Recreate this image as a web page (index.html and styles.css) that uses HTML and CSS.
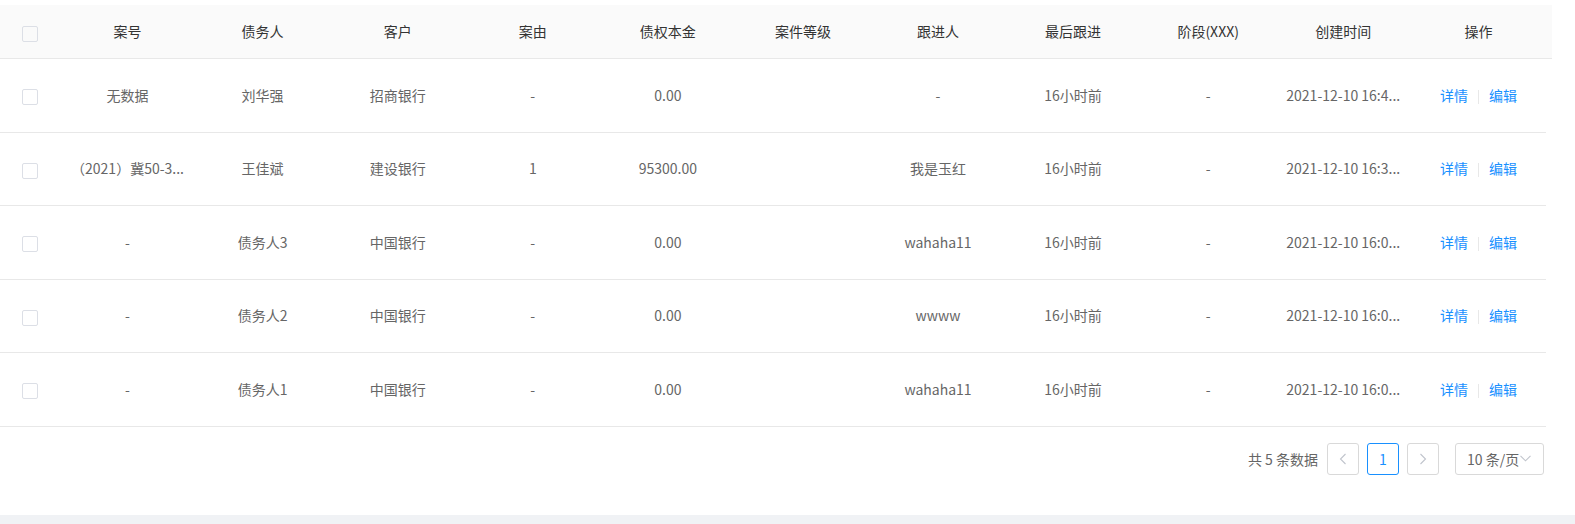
FILE: index.html
```html
<!DOCTYPE html>
<html lang="zh-CN">
<head>
    <meta charset="UTF-8">
    <meta name="viewport" content="width=device-width, initial-scale=1.0">
    <title>案件列表</title>
    <link rel="stylesheet" href="styles.css">
</head>
<body>
    <div class="panel">
        <table class="table-head">
            <colgroup>
                <col class="col-check">
                <col><col><col><col><col><col><col><col><col><col><col>
                <col class="col-gutter">
            </colgroup>
            <thead>
                <tr>
                    <th><span class="checkbox"></span></th>
                    <th><div class="cell">案号</div></th>
                    <th><div class="cell">债务人</div></th>
                    <th><div class="cell">客户</div></th>
                    <th><div class="cell">案由</div></th>
                    <th><div class="cell">债权本金</div></th>
                    <th><div class="cell">案件等级</div></th>
                    <th><div class="cell">跟进人</div></th>
                    <th><div class="cell">最后跟进</div></th>
                    <th><div class="cell">阶段(XXX)</div></th>
                    <th><div class="cell">创建时间</div></th>
                    <th><div class="cell">操作</div></th>
                    <th class="gutter"></th>
                </tr>
            </thead>
        </table>
        <table class="table-body">
            <colgroup>
                <col class="col-check">
                <col><col><col><col><col><col><col><col><col><col><col>
            </colgroup>
            <tbody>
                <tr>
                    <td><span class="checkbox"></span></td>
                    <td><div class="cell">无数据</div></td>
                    <td><div class="cell">刘华强</div></td>
                    <td><div class="cell">招商银行</div></td>
                    <td><div class="cell">-</div></td>
                    <td><div class="cell">0.00</div></td>
                    <td><div class="cell"></div></td>
                    <td><div class="cell">-</div></td>
                    <td><div class="cell">16小时前</div></td>
                    <td><div class="cell">-</div></td>
                    <td><div class="cell">2021-12-10 16:4...</div></td>
                    <td><div class="cell"><a class="link">详情</a><span class="divider"></span><a class="link">编辑</a></div></td>
                </tr>
                <tr>
                    <td><span class="checkbox"></span></td>
                    <td><div class="cell">（2021）冀50-3...</div></td>
                    <td><div class="cell">王佳斌</div></td>
                    <td><div class="cell">建设银行</div></td>
                    <td><div class="cell">1</div></td>
                    <td><div class="cell">95300.00</div></td>
                    <td><div class="cell"></div></td>
                    <td><div class="cell">我是玉红</div></td>
                    <td><div class="cell">16小时前</div></td>
                    <td><div class="cell">-</div></td>
                    <td><div class="cell">2021-12-10 16:3...</div></td>
                    <td><div class="cell"><a class="link">详情</a><span class="divider"></span><a class="link">编辑</a></div></td>
                </tr>
                <tr>
                    <td><span class="checkbox"></span></td>
                    <td><div class="cell">-</div></td>
                    <td><div class="cell">债务人3</div></td>
                    <td><div class="cell">中国银行</div></td>
                    <td><div class="cell">-</div></td>
                    <td><div class="cell">0.00</div></td>
                    <td><div class="cell"></div></td>
                    <td><div class="cell">wahaha11</div></td>
                    <td><div class="cell">16小时前</div></td>
                    <td><div class="cell">-</div></td>
                    <td><div class="cell">2021-12-10 16:0...</div></td>
                    <td><div class="cell"><a class="link">详情</a><span class="divider"></span><a class="link">编辑</a></div></td>
                </tr>
                <tr>
                    <td><span class="checkbox"></span></td>
                    <td><div class="cell">-</div></td>
                    <td><div class="cell">债务人2</div></td>
                    <td><div class="cell">中国银行</div></td>
                    <td><div class="cell">-</div></td>
                    <td><div class="cell">0.00</div></td>
                    <td><div class="cell"></div></td>
                    <td><div class="cell">wwww</div></td>
                    <td><div class="cell">16小时前</div></td>
                    <td><div class="cell">-</div></td>
                    <td><div class="cell">2021-12-10 16:0...</div></td>
                    <td><div class="cell"><a class="link">详情</a><span class="divider"></span><a class="link">编辑</a></div></td>
                </tr>
                <tr>
                    <td><span class="checkbox"></span></td>
                    <td><div class="cell">-</div></td>
                    <td><div class="cell">债务人1</div></td>
                    <td><div class="cell">中国银行</div></td>
                    <td><div class="cell">-</div></td>
                    <td><div class="cell">0.00</div></td>
                    <td><div class="cell"></div></td>
                    <td><div class="cell">wahaha11</div></td>
                    <td><div class="cell">16小时前</div></td>
                    <td><div class="cell">-</div></td>
                    <td><div class="cell">2021-12-10 16:0...</div></td>
                    <td><div class="cell"><a class="link">详情</a><span class="divider"></span><a class="link">编辑</a></div></td>
                </tr>
            </tbody>
        </table>
        <div class="pager">
            <span class="total">共 5 条数据</span>
            <span class="page-btn"><svg width="8" height="12" viewBox="0 0 8 12"><path d="M6.5 1L1.5 6l5 5" fill="none" stroke="#c0c4cc" stroke-width="1.1"/></svg></span>
            <span class="page-btn active">1</span>
            <span class="page-btn next"><svg width="8" height="12" viewBox="0 0 8 12"><path d="M1.5 1l5 5-5 5" fill="none" stroke="#c0c4cc" stroke-width="1.1"/></svg></span>
            <span class="page-size">10 条/页<svg width="11" height="7" viewBox="0 0 11 7"><path d="M0.5 0.8l5 5 5-5" fill="none" stroke="#c0c4cc" stroke-width="1.1"/></svg></span>
        </div>
    </div>
</body>
</html>
```

FILE: styles.css
```css
html {
    font-family: "Noto Sans CJK SC", "Liberation Sans", sans-serif;
}
body {
    margin: 0;
    background-color: #f0f2f5;
}
.panel {
    background-color: #fff;
    height: 515px;
    padding-top: 5px;
    box-sizing: border-box;
}
table {
    border-collapse: collapse;
    table-layout: fixed;
    border-spacing: 0;
}
.table-head {
    width: 1552px;
}
.table-body {
    width: 1546px;
}
.col-check {
    width: 60px;
}
.col-gutter {
    width: 6px;
}
th, td {
    padding: 0;
    text-align: center;
    font-size: 14px;
    border-bottom: 1px solid #e8e8e8;
    overflow: hidden;
}
th {
    height: 53px;
    background-color: #fafafa;
    color: #333;
    font-weight: normal;
}
td {
    height: 72.5px;
    color: #666;
}
.cell {
    padding: 0 8px;
    white-space: nowrap;
    overflow: hidden;
    text-overflow: ellipsis;
    line-height: 23px;
}
.checkbox {
    display: inline-block;
    width: 14px;
    height: 14px;
    border: 1px solid #dcdfe6;
    border-radius: 2px;
    vertical-align: middle;
}
.link {
    color: #1890ff;
    cursor: pointer;
}
.divider {
    display: inline-block;
    width: 1px;
    height: 14px;
    background-color: #e8e8e8;
    margin: 0 10px;
    vertical-align: middle;
}
.pager {
    width: 1544px;
    display: flex;
    justify-content: flex-end;
    align-items: center;
    margin-top: 16px;
    font-size: 14px;
    color: #666;
}
.total {
    margin-right: 9px;
}
.page-btn {
    width: 30px;
    height: 30px;
    border: 1px solid #d9d9d9;
    border-radius: 3px;
    display: flex;
    align-items: center;
    justify-content: center;
    margin-right: 8px;
    color: #1890ff;
}
.page-btn.active {
    border-color: #1890ff;
}
.page-btn.next {
    margin-right: 16px;
}
.page-size {
    height: 30px;
    width: 76px;
    border: 1px solid #d9d9d9;
    border-radius: 3px;
    display: flex;
    align-items: center;
    padding-left: 11px;
    gap: 1px;
}
```
